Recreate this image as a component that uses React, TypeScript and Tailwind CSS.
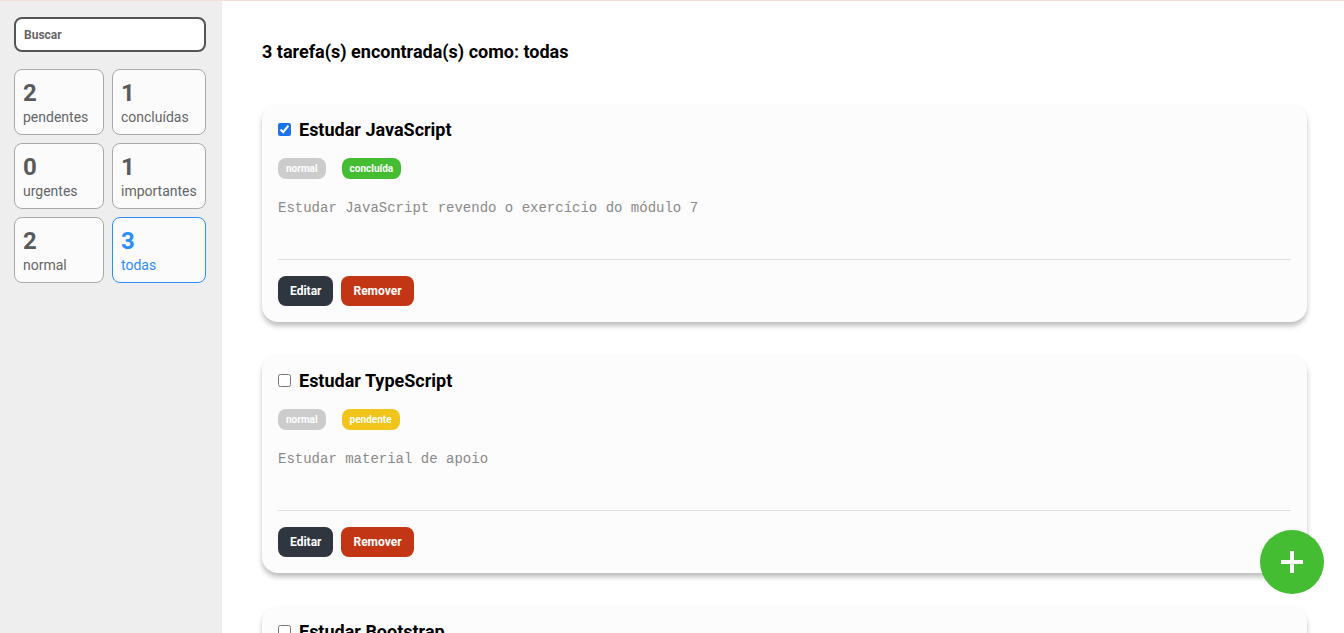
import React from "react";

const tasks = [
  { title: "Estudar JavaScript", done: true, desc: "Estudar JavaScript revendo o exercício do módulo 7" },
  { title: "Estudar TypeScript", done: false, desc: "Estudar material de apoio" },
  { title: "Estudar Bootstrap", done: false, desc: "Estudar Bootstrap" },
];

const stats = [
  { n: 2, label: "pendentes" },
  { n: 1, label: "concluídas" },
  { n: 0, label: "urgentes" },
  { n: 1, label: "importantes" },
  { n: 2, label: "normal" },
  { n: 3, label: "todas", active: true },
];

export default function App() {
  return (
    <div className="h-[633px] w-[1344px] overflow-hidden flex flex-col bg-white" style={{ fontFamily: "Roboto, 'Liberation Sans', sans-serif" }}>
      <div className="h-px bg-[#f6ddd6] shrink-0" />
      <div className="flex flex-1 min-h-0">
        <aside className="w-[222px] shrink-0 bg-[#eeeeee] px-[14px] pt-[16px]">
          <input
            className="w-[192px] h-[35px] rounded-lg border-2 border-[#555] bg-white px-[8px] text-[12px] font-bold text-[#444] placeholder:text-[#666] outline-none"
            placeholder="Buscar"
          />
          <div className="mt-[17px] grid grid-cols-[90px_94px] gap-2">
            {stats.map((s) => (
              <div
                key={s.label}
                className={`h-[66px] rounded-lg border bg-[#fbfbfb] px-[8px] pt-[8px] ${s.active ? "border-[#2d8cff] text-[#2d8cff]" : "border-[#a9a9a9] text-[#5a5a5a]"}`}
              >
                <div className="text-[24px] font-bold leading-[30px]">{s.n}</div>
                <div className={`text-[14px] leading-[18px] ${s.active ? "" : "text-[#666]"}`}>{s.label}</div>
              </div>
            ))}
          </div>
        </aside>
        <main className="flex-1 pl-10 pr-[37px] pt-[39px]">
          <h2 className="text-[18px] font-bold leading-[24px] text-black">3 tarefa(s) encontrada(s) como: todas</h2>
          <div className="mt-[40px] flex flex-col gap-[33px]">
            {tasks.map((t) => (
              <div key={t.title} className="rounded-2xl bg-[#fcfcfc] px-4 pt-4 pb-4 shadow-[0_4px_5px_rgba(0,0,0,0.25)]">
                <div className="flex items-center h-[19px]">
                  <input type="checkbox" defaultChecked={t.done} className="w-[13px] h-[13px] m-0 accent-[#1a73e8]" />
                  <span className="ml-2 text-[18px] font-bold text-black">{t.title}</span>
                </div>
                <div className="mt-[19px] flex gap-4">
                  <span className="h-[21px] px-2 rounded-lg bg-[#cccccc] text-white text-[10px] font-bold flex items-center">normal</span>
                  <span className={`h-[21px] px-2 rounded-lg text-white text-[10px] font-bold flex items-center ${t.done ? "bg-[#44bd32]" : "bg-[#f0c419]"}`}>
                    {t.done ? "concluída" : "pendente"}
                  </span>
                </div>
                <p className="mt-[19px] text-[14px] leading-[20px] text-[#8a8a8a]" style={{ fontFamily: "'Liberation Mono', 'DejaVu Sans Mono', monospace" }}>
                  {t.desc}
                </p>
                <div className="mt-[41px] h-px bg-[#dddddd]" />
                <div className="mt-4 flex gap-2">
                  <button className="h-[30px] px-3 rounded-lg bg-[#2f3640] text-white text-[12px] font-bold">Editar</button>
                  <button className="h-[30px] px-3 rounded-lg bg-[#c23616] text-white text-[12px] font-bold">Remover</button>
                </div>
              </div>
            ))}
          </div>
        </main>
      </div>
      <button className="fixed right-[20px] bottom-[39px] w-16 h-16 rounded-full bg-[#44bd32] flex items-center justify-center">
        <svg width="22" height="22" viewBox="0 0 22 22">
          <path d="M11 0v22M0 11h22" stroke="white" strokeWidth="4" />
        </svg>
      </button>
    </div>
  );
}
